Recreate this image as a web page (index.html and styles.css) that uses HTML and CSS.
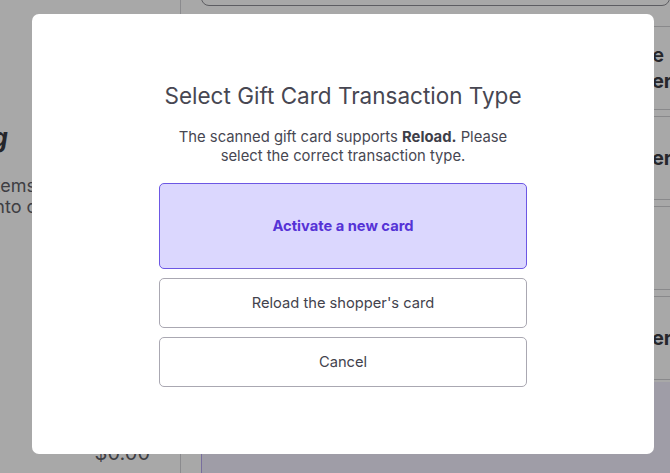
FILE: index.html
```html
<!DOCTYPE html>
<html lang="en">
<head>
<meta charset="utf-8">
<title>Select Gift Card Transaction Type</title>
<link rel="stylesheet" href="styles.css">
</head>
<body>
<div class="page">
  <aside class="sidebar">
    <div class="empty">
      <div class="empty-title">Start scanning</div>
      <div class="empty-line first">Scan or search items</div>
      <div class="empty-line second">to add them into cart</div>
    </div>
    <div class="total">$0.00</div>
  </aside>
  <main class="main">
    <div class="search"></div>
    <div class="content">
      <div class="left-area"></div>
      <div class="cards">
        <div class="card">
          <div class="card-line l1">Gift card type</div>
          <div class="card-line l2 bold">Enter</div>
        </div>
        <div class="card"><div class="card-line l2 bold">Enter</div></div>
        <div class="card"></div>
        <div class="card"><div class="card-line l2 bold">Enter</div></div>
      </div>
    </div>
    <div class="footer"></div>
  </main>
</div>

<div class="overlay">
  <div class="modal" role="dialog">
    <h1 class="modal-title">Select Gift Card Transaction Type</h1>
    <p class="modal-desc">The scanned gift card supports <strong>Reload.</strong> Please<br>select the correct transaction type.</p>
    <div class="actions">
      <button class="btn btn-primary">Activate a new card</button>
      <button class="btn">Reload the shopper's card</button>
      <button class="btn">Cancel</button>
    </div>
  </div>
</div>
</body>
</html>
```

FILE: styles.css
```css
* { box-sizing: border-box; }
html, body {
  margin: 0;
  padding: 0;
  width: 670px;
  height: 473px;
  overflow: hidden;
  font-family: Inter, "Noto Sans", "Liberation Sans", sans-serif;
  background: #ffffff;
}

/* underlying page */
.page {
  display: flex;
  height: 473px;
}
.sidebar {
  width: 181px;
  border-right: 1px solid #d3d3d8;
  display: flex;
  flex-direction: column;
  overflow: hidden;
}
.empty {
  margin-top: 122px;
  margin-left: -300px;
  width: 400px;
  text-align: right;
  white-space: nowrap;
  color: #5f5f67;
}
.empty-title {
  font-size: 26px;
  font-weight: 700;
  font-style: italic;
  color: #3a3a42;
  padding-right: 92px;
  line-height: 32px;
}
.empty-line {
  font-size: 18px;
  line-height: 21px;
}
.empty-line.first { margin-top: 21px; padding-right: 64px; }
.empty-line.second { padding-right: 40px; }
.total {
  margin-top: auto;
  margin-bottom: 7px;
  padding-right: 30px;
  text-align: right;
  font-size: 20px;
  line-height: 26px;
  color: #5f5f67;
}
.main {
  flex: 1;
  display: flex;
  flex-direction: column;
  padding-left: 20px;
}
.search {
  height: 30px;
  margin-top: -24px;
  border: 1px solid #8e8e95;
  border-radius: 8px;
  flex-shrink: 0;
}
.content {
  flex: 1;
  display: flex;
  padding-top: 20px;
}
.left-area { flex: 1; }
.cards {
  width: 200px;
  display: flex;
  flex-direction: column;
  gap: 6px;
}
.card {
  height: 84px;
  border-top: 1px solid #d0d0d4;
  border-bottom: 1px solid #d0d0d4;
  display: flex;
  flex-direction: column;
  justify-content: center;
  align-items: flex-end;
}
.card-line {
  font-size: 20px;
  line-height: 26px;
  color: #3a3a42;
  white-space: nowrap;
  font-weight: 600;
}
.card-line.l1 { margin-right: 6px; }
.card-line.l2 { margin-right: -2px; }
.card-line.bold { font-weight: 700; }
.footer {
  height: 94px;
  background: #f2effe;
  border-left: 1px solid #b6a8f0;
  flex-shrink: 0;
  margin-top: 2px;
}

/* overlay */
.overlay {
  position: fixed;
  inset: 0;
  background: rgba(0, 0, 0, 0.34);
  padding: 14px 0 0 32px;
}
.modal {
  width: 622px;
  height: 440px;
  background: #ffffff;
  border-radius: 7px;
  display: flex;
  flex-direction: column;
  align-items: center;
  padding-top: 68px;
}
.modal-title {
  margin: 0;
  font-size: 22.5px;
  font-weight: 400;
  line-height: 28px;
  color: #474752;
}
.modal-desc {
  margin: 18px 0 0;
  font-size: 14.8px;
  line-height: 19px;
  color: #474752;
  text-align: center;
}
.modal-desc strong { font-weight: 700; color: #3e3e48; }
.actions {
  margin-top: 17px;
  width: 368px;
  display: flex;
  flex-direction: column;
  gap: 9px;
}
.btn {
  height: 50px;
  border: 1px solid #aaa8b2;
  border-radius: 5px;
  background: #ffffff;
  font-family: inherit;
  font-size: 14.7px;
  color: #43434d;
  cursor: pointer;
}
.btn-primary {
  height: 86px;
  background: #dbd7fe;
  border-color: #6c57e4;
  color: #5533d6;
  font-weight: 700;
}
```
